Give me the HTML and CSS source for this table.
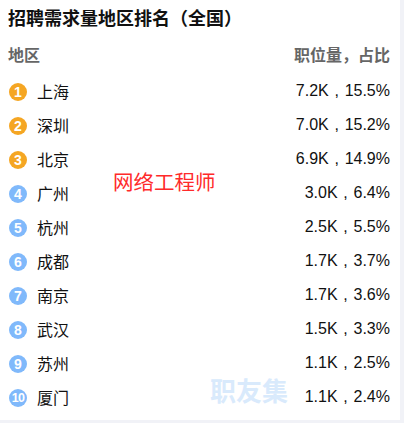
FILE: index.html
```html
<!DOCTYPE html>
<html lang="zh-CN">
<head>
<meta charset="utf-8">
<link rel="stylesheet" href="styles.css">
</head>
<body>
<div class="card">
  <div class="title">招聘需求量地区排名（全国）</div>
  <div class="head">
    <span>地区</span>
    <span>职位量，占比</span>
  </div>
  <ul class="list">
    <li class="row"><span class="city"><i class="rank top">1</i>上海</span><span class="val">7.2K , 15.5%</span></li>
    <li class="row"><span class="city"><i class="rank top">2</i>深圳</span><span class="val">7.0K , 15.2%</span></li>
    <li class="row"><span class="city"><i class="rank top">3</i>北京</span><span class="val">6.9K , 14.9%</span></li>
    <li class="row"><span class="city"><i class="rank">4</i>广州</span><span class="val">3.0K , 6.4%</span></li>
    <li class="row"><span class="city"><i class="rank">5</i>杭州</span><span class="val">2.5K , 5.5%</span></li>
    <li class="row"><span class="city"><i class="rank">6</i>成都</span><span class="val">1.7K , 3.7%</span></li>
    <li class="row"><span class="city"><i class="rank">7</i>南京</span><span class="val">1.7K , 3.6%</span></li>
    <li class="row"><span class="city"><i class="rank">8</i>武汉</span><span class="val">1.5K , 3.3%</span></li>
    <li class="row"><span class="city"><i class="rank">9</i>苏州</span><span class="val">1.1K , 2.5%</span></li>
    <li class="row"><span class="city"><i class="rank small">10</i>厦门</span><span class="val">1.1K , 2.4%</span></li>
  </ul>
  <div class="mark-red">网络工程师</div>
  <div class="mark-blue">职友集</div>
</div>
</body>
</html>
```
FILE: styles.css
```css
html, body {
  margin: 0;
  padding: 0;
}
body {
  background: #f1f2f7;
  font-family: "Liberation Sans", "Noto Sans CJK SC", sans-serif;
  color: #111;
  width: 404px;
  height: 423px;
  overflow: hidden;
}
.card {
  position: relative;
  width: 400px;
  height: 420px;
  background: #fff;
  box-sizing: border-box;
  padding: 0 10px 0 8px;
}
.title {
  height: 34px;
  line-height: 34px;
  font-size: 18px;
  font-weight: bold;
  color: #111;
  font-family: "Noto Sans CJK SC", sans-serif;
}
.head {
  height: 40px;
  display: flex;
  justify-content: space-between;
  align-items: center;
  font-size: 16px;
  font-weight: bold;
  color: #666;
  font-family: "Noto Sans CJK SC", sans-serif;
}
.list {
  list-style: none;
  margin: 0;
  padding: 0;
}
.row {
  height: 34px;
  display: flex;
  justify-content: space-between;
  align-items: center;
  font-size: 16px;
}
.city {
  display: flex;
  align-items: center;
  font-family: "Noto Sans CJK SC", sans-serif;
  color: #111;
}
.rank {
  font-style: normal;
  width: 18px;
  height: 18px;
  border-radius: 50%;
  background: #80b9fb;
  color: #fff;
  font-family: "Liberation Sans", sans-serif;
  font-weight: bold;
  font-size: 14px;
  line-height: 18px;
  text-align: center;
  margin: 2px 10px 0 1px;
}
.rank.top {
  background: #f5a623;
}
.rank.small {
  font-size: 12.5px;
  letter-spacing: -0.8px;
}
.val {
  color: #111;
  white-space: pre;
  word-spacing: 1.3px;
}
.mark-red {
  position: absolute;
  left: 113px;
  top: 168px;
  font-size: 20.5px;
  line-height: 26px;
  color: #ff2a2a;
  font-family: "Noto Sans CJK SC", sans-serif;
}
.mark-blue {
  position: absolute;
  left: 210px;
  top: 372px;
  font-size: 26px;
  line-height: 36px;
  font-weight: bold;
  color: #d9eafc;
  font-family: "Noto Sans CJK SC", sans-serif;
}
```
